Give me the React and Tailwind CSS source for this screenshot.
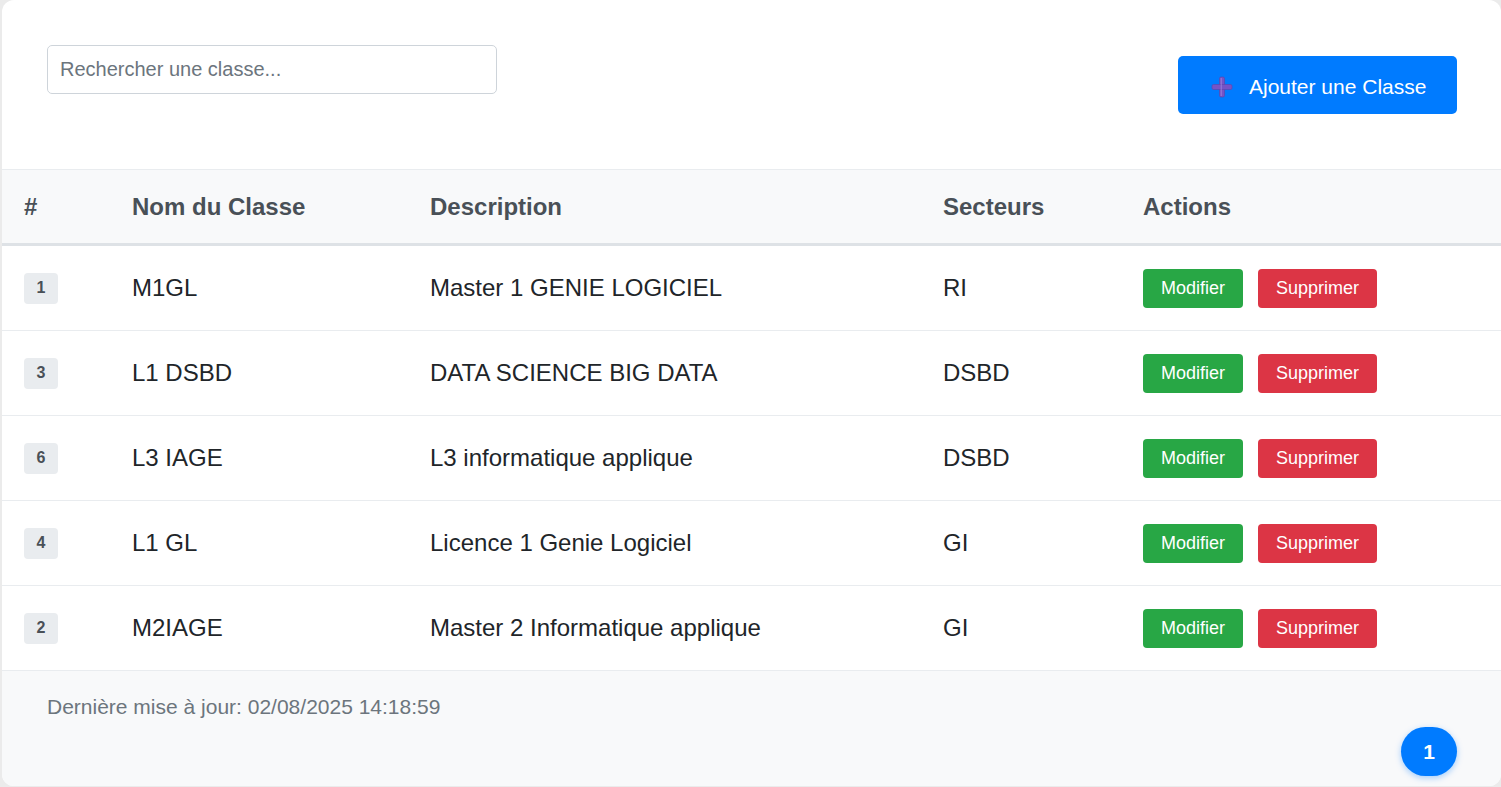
const classes = [
  { id: 1, nom: "M1GL", description: "Master 1 GENIE LOGICIEL", secteur: "RI" },
  { id: 3, nom: "L1 DSBD", description: "DATA SCIENCE BIG DATA", secteur: "DSBD" },
  { id: 6, nom: "L3 IAGE", description: "L3 informatique applique", secteur: "DSBD" },
  { id: 4, nom: "L1 GL", description: "Licence 1 Genie Logiciel", secteur: "GI" },
  { id: 2, nom: "M2IAGE", description: "Master 2 Informatique applique", secteur: "GI" },
];

const cols = "grid grid-cols-[108px_298px_513px_200px_1fr]";

function PlusIcon() {
  return (
    <svg width="22" height="22" viewBox="0 0 22 22">
      <rect x="8.5" y="1" width="5" height="20" rx="1.5" fill="#7653c6" stroke="#5f43a8" strokeWidth="0.6" />
      <rect x="1" y="8.5" width="20" height="5" rx="1.5" fill="#7653c6" stroke="#5f43a8" strokeWidth="0.6" />
      <rect x="9.6" y="2" width="1.4" height="18" fill="#9f86dc" opacity="0.6" />
    </svg>
  );
}

export default function App() {
  return (
    <div className="h-[787px] bg-[#ebebeb] pl-[2px] font-['Liberation_Sans',Arial,sans-serif]">
      <div className="h-[786px] bg-white rounded-[12px] overflow-hidden flex flex-col">
        {/* barre du haut */}
        <div className="h-[170px] shrink-0 flex justify-between items-start pl-[45px] pr-[44px] border-b border-[#e9ecef]">
          <input
            type="text"
            placeholder="Rechercher une classe..."
            className="mt-[45px] w-[450px] h-[49px] px-[12px] text-[20px] text-[#495057] placeholder-[#6c757d] border border-[#ced4da] rounded-[5px] outline-none"
          />
          <button className="mt-[56px] h-[58px] w-[279px] flex items-center pl-[33px] pt-[4px] gap-[16px] bg-[#007bff] text-white text-[21px] rounded-[5px]">
            <PlusIcon />
            Ajouter une Classe
          </button>
        </div>

        {/* en-tête */}
        <div className={`${cols} h-[76px] shrink-0 items-center bg-[#f8f9fa] border-b-[3px] border-[#dee2e6] text-[24px] font-bold text-[#495057]`}>
          <div className="pl-[22px]">#</div>
          <div className="pl-[22px]">Nom du Classe</div>
          <div className="pl-[22px]">Description</div>
          <div className="pl-[22px]">Secteurs</div>
          <div className="pl-[22px]">Actions</div>
        </div>

        {/* lignes */}
        {classes.map((c) => (
          <div
            key={c.id}
            className={`${cols} h-[85px] shrink-0 items-center border-b border-[#e9ecef] text-[24px] text-[#212529]`}
          >
            <div className="pl-[22px]">
              <span className="w-[34px] h-[31px] flex items-center justify-center rounded-[4px] bg-[#e9ecef] text-[16px] font-bold text-[#495057]">
                {c.id}
              </span>
            </div>
            <div className="pl-[22px]">{c.nom}</div>
            <div className="pl-[22px]">{c.description}</div>
            <div className="pl-[22px]">{c.secteur}</div>
            <div className="pl-[22px] flex gap-[15px]">
              <button className="w-[100px] h-[39px] rounded-[4px] bg-[#28a745] text-white text-[18px]">
                Modifier
              </button>
              <button className="w-[119px] h-[39px] rounded-[4px] bg-[#dc3545] text-white text-[18px]">
                Supprimer
              </button>
            </div>
          </div>
        ))}

        {/* pied */}
        <div className="flex-1 bg-[#f8f9fa] pl-[45px] pr-[44px] pt-[24px]">
          <div className="h-[24px] leading-[24px] text-[21px] text-[#6c757d]">
            Dernière mise à jour: 02/08/2025 14:18:59
          </div>
          <div className="flex justify-end mt-[8px]">
            <span className="w-[56px] h-[49px] rounded-full bg-[#007bff] text-white text-[21px] font-bold flex items-center justify-center shadow-[0_2px_6px_rgba(0,123,255,0.35)]">
              1
            </span>
          </div>
        </div>
      </div>
    </div>
  );
}
